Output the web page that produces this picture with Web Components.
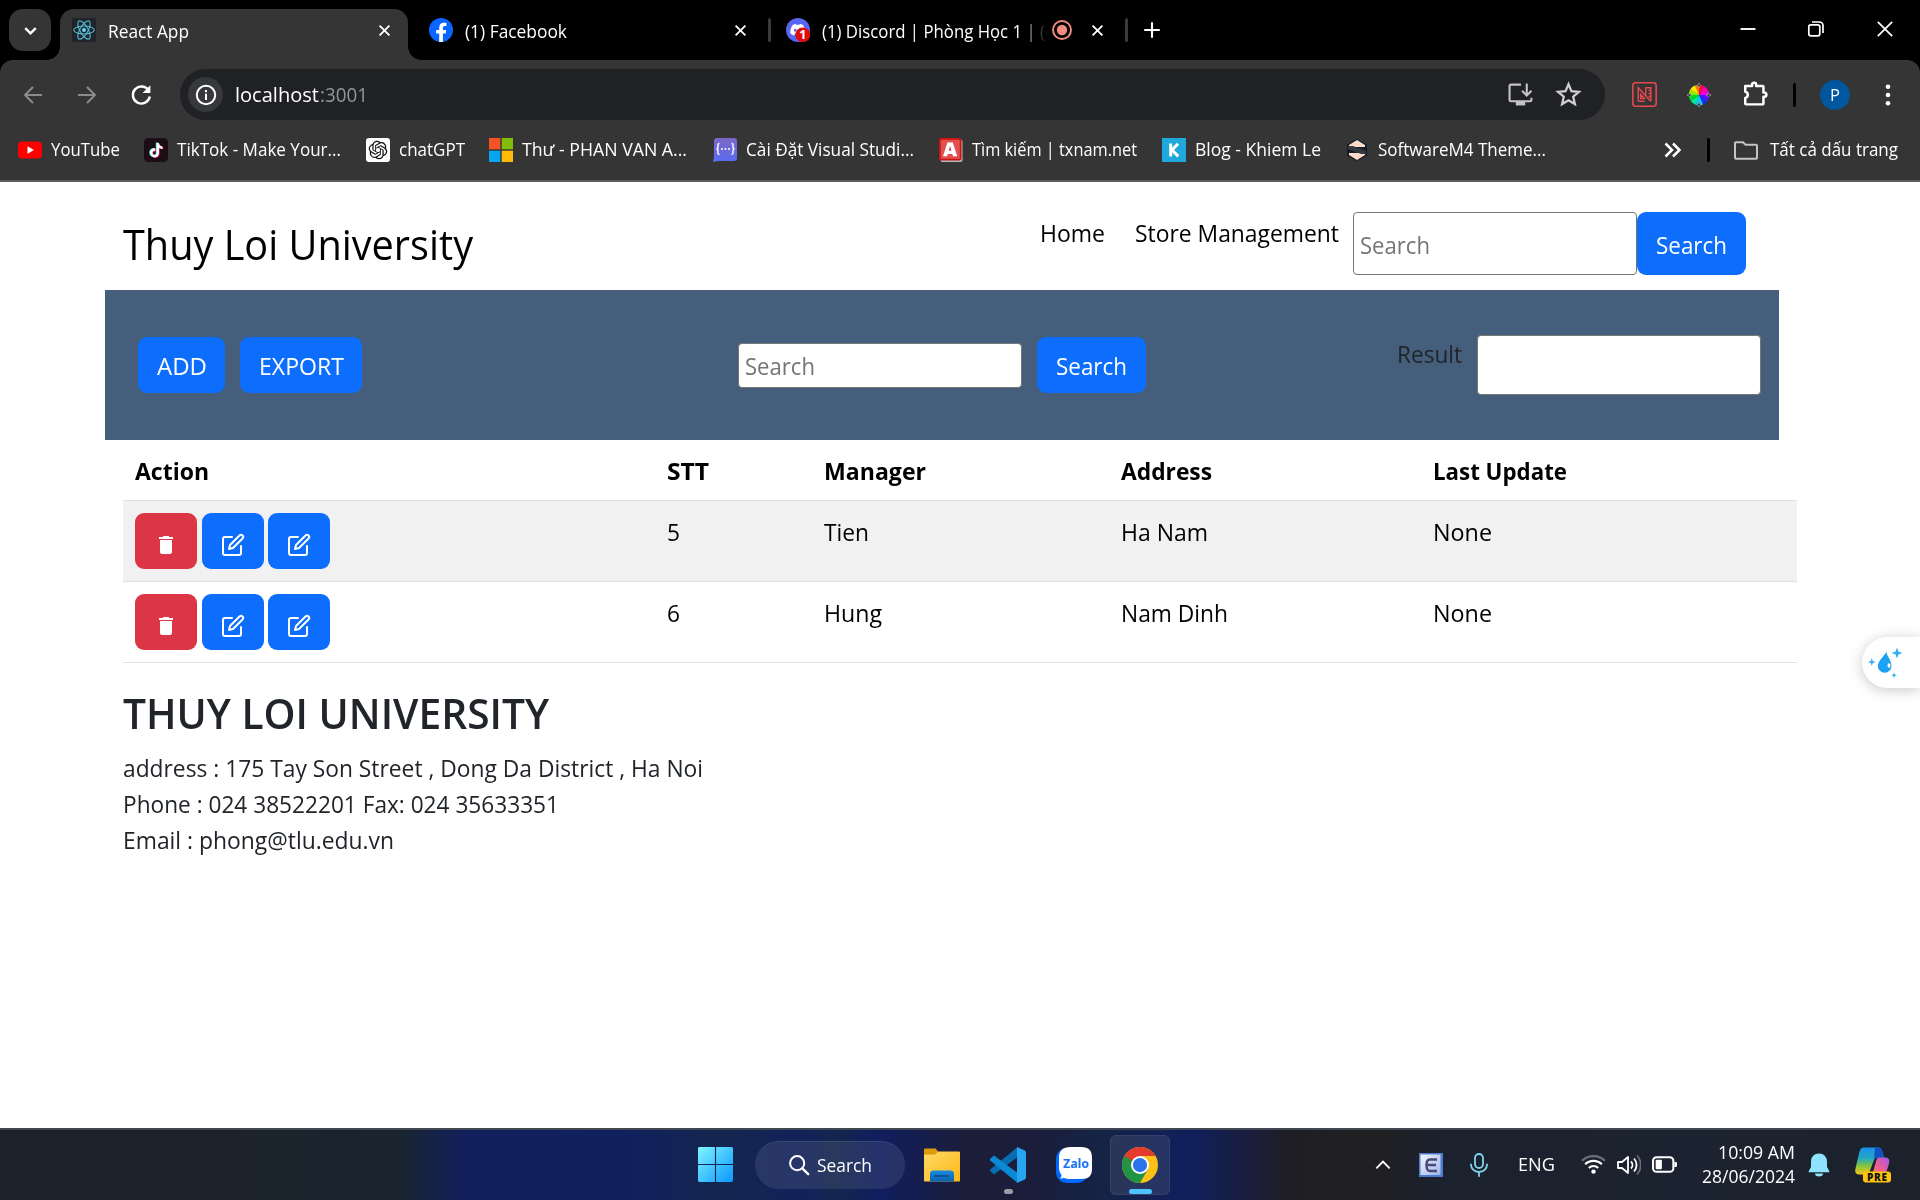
<!DOCTYPE html>
<html lang="vi">
<head>
<meta charset="utf-8">
<title>React App</title>
<style>
html,body{margin:0;height:100%;overflow:hidden;background:#fff;font-family:"Open Sans","Noto Sans",sans-serif}
body{display:flex;flex-direction:column}
store-page{flex:1}
</style>
</head>
<body>
<tab-strip></tab-strip>
<address-bar></address-bar>
<bookmark-bar></bookmark-bar>
<store-page></store-page>
<task-bar></task-bar>
<side-bubble></side-bubble>
<script>
const ICONS = {
down:'<path d="M6 9.2l6 6 6-6" fill="none" stroke="#fff" stroke-width="2.8"/>',
react:'<rect width="24" height="24" rx="2" fill="#20232a"/><g fill="none" stroke="#52b9d3" stroke-width="1.1"><ellipse cx="12" cy="12" rx="10.3" ry="4"/><ellipse cx="12" cy="12" rx="10.3" ry="4" transform="rotate(60 12 12)"/><ellipse cx="12" cy="12" rx="10.3" ry="4" transform="rotate(120 12 12)"/></g><circle cx="12" cy="12" r="2" fill="#61dafb"/>',
close:'<path d="M6.4 6.4l11.2 11.2M17.6 6.4L6.4 17.6" stroke="#fff" stroke-width="2.1"/>',
plus:'<path d="M12 4.2v15.6M4.2 12h15.6" stroke="#fff" stroke-width="2.1"/>',
facebook:'<circle cx="12" cy="12" r="12" fill="#0866ff"/><path fill="#fff" d="M16.7 15.5l.5-3.5h-3.3V9.8c0-1 .5-1.9 2-1.9h1.5v-3S16 4.700 14.700 4.700c-2.700 0-4.500 1.700-4.500 4.700V12h-3v3.500h3V24h3.700v-8.500z"/>',
discord:'<circle cx="12" cy="12" r="12" fill="#5865f2"/><path transform="translate(4.300 4.300) scale(.62)" fill="#fff" d="M20.317 4.37a19.8 19.8 0 00-4.885-1.515.074.074 0 00-.079.037c-.21.375-.444.865-.608 1.25-1.845-.277-3.68-.277-5.487 0-.164-.394-.406-.875-.618-1.25a.077.077 0 00-.078-.037 19.736 19.736 0 00-4.885 1.515.07.07 0 00-.033.028C.533 9.046-.319 13.58.099 18.058a.082.082 0 00.031.056c2.053 1.508 4.041 2.423 5.993 3.029a.078.078 0 00.084-.028c.462-.63.873-1.295 1.226-1.994a.076.076 0 00-.042-.106c-.652-.247-1.274-.549-1.872-.892a.077.077 0 01-.008-.128c.126-.094.252-.192.372-.291a.074.074 0 01.078-.011c3.928 1.794 8.18 1.794 12.061 0a.074.074 0 01.079.01c.12.099.246.198.373.292a.077.077 0 01-.007.128 12.299 12.299 0 01-1.873.891.077.077 0 00-.041.107c.36.698.772 1.363 1.225 1.993a.076.076 0 00.084.029c1.961-.607 3.95-1.522 6.002-3.03a.077.077 0 00.032-.055c.5-5.177-.838-9.674-3.549-13.66a.061.061 0 00-.031-.029zM8.02 15.331c-1.183 0-2.157-1.086-2.157-2.419s.956-2.419 2.157-2.419c1.211 0 2.176 1.095 2.157 2.419 0 1.333-.956 2.419-2.157 2.419zm7.975 0c-1.183 0-2.157-1.086-2.157-2.419s.955-2.419 2.157-2.419c1.211 0 2.176 1.095 2.157 2.419 0 1.333-.946 2.419-2.157 2.419z"/><circle cx="16.800" cy="16.800" r="7.400" fill="#e00b0b"/><text x="16.900" y="21.200" text-anchor="middle" font-family="Open Sans" font-weight="700" font-size="12.500" fill="#fff">1</text>',
record:'<circle cx="12" cy="12" r="9" fill="none" stroke="#f28b82" stroke-width="1.900"/><circle cx="12" cy="12" r="5.200" fill="#f28b82"/>',
min:'<path d="M4.500 12h15" stroke="#fff" stroke-width="1.900"/>',
restore:'<rect x="4.800" y="7.800" width="11" height="11" rx="2" fill="none" stroke="#fff" stroke-width="1.700"/><path d="M8 5h7.500a3.500 3.500 0 013.500 3.500V16" fill="none" stroke="#fff" stroke-width="1.700"/>',
wclose:'<path d="M4.800 4.800l14.400 14.400M19.200 4.800L4.800 19.200" stroke="#fff" stroke-width="1.700"/>',
back:'<path d="M21 12H4.500M12 4l-8 8 8 8" fill="none" stroke="#8b8b8b" stroke-width="2"/>',
fwd:'<path d="M3 12h16.500M12 4l8 8-8 8" fill="none" stroke="#8b8b8b" stroke-width="2"/>',
reload:'<path d="M19 8.300A8.200 8.200 0 1020 14" fill="none" stroke="#fff" stroke-width="2.300"/><path d="M20.500 3v7.500H13z" fill="#fff"/><path d="M16.200 7.400h2v1h-2z" fill="#fff"/>',
info:'<circle cx="12" cy="12" r="9.200" fill="none" stroke="#fff" stroke-width="2"/><path d="M12 10.800v6.200M12 7v2.200" stroke="#fff" stroke-width="2"/>',
install:'<path d="M12.500 2.500H2.800a1.300 1.300 0 00-1.300 1.300v13.400a1.300 1.300 0 001.300 1.300h18.400a1.300 1.300 0 001.300-1.300V15" fill="none" stroke="#c4c4c4" stroke-width="2"/><path d="M7.500 19h9v3.500h-9z" fill="#c4c4c4"/><path d="M18 1.500v11M13.500 8.500l4.500 4.500 4.500-4.500" fill="none" stroke="#c4c4c4" stroke-width="2"/>',
star:'<path d="M12 2.800l2.600 6.200 6.700.6-5.100 4.400 1.500 6.500L12 17.100l-5.700 3.400 1.500-6.500-5.100-4.400 6.700-.6z" fill="none" stroke="#d0d0d0" stroke-width="2"/>',
ruler:'<rect x=".8" y=".8" width="22.400" height="22.400" rx="2.500" fill="none" stroke="#e5484d" stroke-width="1.500"/><path d="M6 18.500V5.500l12 13M8.300 15.800v-4l3.600 4zM13.200 13V5.500h4.800v13M15.800 8h2M15.800 11h2M15.800 14h2M6 18.500h6" fill="none" stroke="#e5484d" stroke-width="1.400"/>',
puzzle:'<path d="M3 5.500h6.300V4.400a1.900 1.900 0 013.800 0v1.100H19a.8.800 0 01.8.800v5.300h.8a1.900 1.900 0 010 3.800h-.8v6.300a.8.800 0 01-.8.800H3.800A.8.800 0 013 21.700v-5.200a2.900 2.900 0 000-5.700z" fill="none" stroke="#fff" stroke-width="2.300" stroke-linejoin="round"/>',
dots:'<g fill="#fff"><circle cx="12" cy="3.800" r="2.300"/><circle cx="12" cy="12" r="2.300"/><circle cx="12" cy="20.200" r="2.300"/></g>',
youtube:'<rect y="3.500" width="24" height="17" rx="4" fill="#f00"/><path d="M9.500 8.200l6.500 3.800-6.500 3.800z" fill="#fff"/>',
tiktok:'<rect width="24" height="24" rx="4.500" fill="#1c0c14"/><g id="n"><path id="p" transform="translate(4.300 4.600) scale(.6)" fill="#25f4ee" d="M12.525.02c1.31-.02 2.61-.01 3.91-.02.08 1.530.63 3.090 1.750 4.170 1.120 1.110 2.700 1.620 4.240 1.790v4.030c-1.440-.05-2.890-.35-4.200-.97-.57-.26-1.100-.59-1.620-.93-.01 2.920.01 5.840-.02 8.750-.08 1.400-.54 2.790-1.350 3.940-1.310 1.920-3.580 3.170-5.910 3.210-1.430.08-2.860-.31-4.080-1.030-2.020-1.190-3.440-3.370-3.650-5.710-.02-.5-.03-1-.01-1.490.18-1.900 1.120-3.720 2.580-4.960 1.660-1.440 3.980-2.130 6.150-1.720.02 1.480-.04 2.960-.04 4.440-.99-.32-2.150-.23-3.020.37-.63.41-1.110 1.040-1.360 1.750-.21.51-.15 1.070-.14 1.610.24 1.640 1.820 3.020 3.500 2.870 1.120-.01 2.190-.66 2.770-1.610.19-.33.4-.67.41-1.060.1-1.790.06-3.570.07-5.360.01-4.030-.01-8.050.02-12.070z"/></g><path transform="translate(5.700 5.400) scale(.6)" fill="#fe2c55" d="M12.525 0h3.900c.08 1.600.63 3.100 1.750 4.200 1.120 1.100 2.700 1.600 4.240 1.800v4c-1.440 0-4.500-.8-5.820-1.900v8.800c-.2 5-4 7.100-7.300 7.100-4 0-7.700-3.200-7.700-7.600 0-4.500 4-8.500 8.700-7.700v4.500c-2.300-.6-4.500 1-4.500 3.400 0 1.900 1.500 3.200 3.500 3.200 1.800 0 3.200-1.200 3.200-3.200z"/><path transform="translate(5 5) scale(.6)" fill="#fff" d="M12.525 0h3.900c.08 1.600.63 3.100 1.750 4.200 1.120 1.100 2.700 1.600 4.240 1.800v4c-1.440 0-4.500-.8-5.820-1.900v8.800c-.2 5-4 7.100-7.300 7.100-4 0-7.700-3.200-7.700-7.600 0-4.500 4-8.500 8.700-7.700v4.500c-2.300-.6-4.500 1-4.500 3.400 0 1.900 1.500 3.200 3.500 3.200 1.800 0 3.200-1.200 3.200-3.200z"/>',
openai:'<rect width="24" height="24" rx="3" fill="#fff"/><path transform="translate(2.700 2.700) scale(.775)" fill="#111" d="M22.2819 9.8211a5.9847 5.9847 0 0 0-.5157-4.9108 6.0462 6.0462 0 0 0-6.5098-2.9A6.0651 6.0651 0 0 0 4.9807 4.1818a5.9847 5.9847 0 0 0-3.9977 2.9 6.0462 6.0462 0 0 0 .7427 7.0966 5.98 5.98 0 0 0 .511 4.9107 6.051 6.051 0 0 0 6.5146 2.9001A5.9847 5.9847 0 0 0 13.2599 24a6.0557 6.0557 0 0 0 5.7718-4.2058 5.9894 5.9894 0 0 0 3.9977-2.9001 6.0557 6.0557 0 0 0-.7475-7.0729zm-9.022 12.6081a4.4755 4.4755 0 0 1-2.8764-1.0408l.1419-.0804 4.7783-2.7582a.7948.7948 0 0 0 .3927-.6813v-6.7369l2.02 1.1686a.071.071 0 0 1 .038.052v5.5826a4.504 4.504 0 0 1-4.4945 4.4944zm-9.6607-4.1254a4.4708 4.4708 0 0 1-.5346-3.0137l.142.0852 4.783 2.7582a.7712.7712 0 0 0 .7806 0l5.8428-3.3685v2.3324a.0804.0804 0 0 1-.0332.0615L9.74 19.9502a4.4992 4.4992 0 0 1-6.1408-1.6464zM2.3408 7.8956a4.485 4.485 0 0 1 2.3655-1.9728V11.6a.7664.7664 0 0 0 .3879.6765l5.8144 3.3543-2.0201 1.1685a.0757.0757 0 0 1-.071 0l-4.8303-2.7865A4.504 4.504 0 0 1 2.3408 7.872zm16.5963 3.8558L13.1038 8.364 15.1192 7.2a.0757.0757 0 0 1 .071 0l4.8303 2.7913a4.4944 4.4944 0 0 1-.6765 8.1042v-5.6772a.79.79 0 0 0-.407-.667zm2.0107-3.0231l-.142-.0852-4.7735-2.7818a.7759.7759 0 0 0-.7854 0L9.409 9.2297V6.8974a.0662.0662 0 0 1 .0284-.0615l4.8303-2.7866a4.4992 4.4992 0 0 1 6.6802 4.66zM8.3065 12.863l-2.02-1.1638a.0804.0804 0 0 1-.038-.0567V6.0742a4.4992 4.4992 0 0 1 7.3757-3.4537l-.142.0805L8.704 5.459a.7948.7948 0 0 0-.3927.6813zm1.0976-2.3654l2.602-1.4998 2.6069 1.4998v2.9994l-2.5974 1.4997-2.6067-1.4997Z"/>',
ms:'<path fill="#f35325" d="M0 0h11.300v11.300H0z"/><path fill="#81bc06" d="M12.700 0H24v11.300H12.700z"/><path fill="#05a6f0" d="M0 12.700h11.300V24H0z"/><path fill="#ffba08" d="M12.700 12.700H24V24H12.700z"/>',
vsm:'<defs><linearGradient id="g" x1="0" y1="0" x2="0" y2="1"><stop offset="0" stop-color="#7a68c8"/><stop offset="1" stop-color="#5b6cf0"/></linearGradient></defs><path fill="url(#g)" d="M4 0h17a3 3 0 013 3v17a3 3 0 01-3 3H5l-5 1 1-5V3a3 3 0 013-3z"/><path d="M6.500 5.500c-2 0-1.500 1.500-1.500 3 0 1.700-.5 2.500-1.500 2.500 1 0 1.500.8 1.500 2.500 0 1.500-.5 3 1.500 3M18.500 5.500c2 0 1.500 1.500 1.500 3 0 1.700.5 2.500 1.500 2.500-1 0-1.500.8-1.500 2.500 0 1.500.5 3-1.500 3" fill="none" stroke="#fff" stroke-width="1.400"/><g fill="#fff"><circle cx="9" cy="11" r="1"/><circle cx="12.500" cy="11" r="1"/><circle cx="16" cy="11" r="1"/></g>',
abox:'<rect x="1.500" y="1.500" width="22" height="22.500" rx="2" fill="#b9b9b9"/><rect x="0" y="0" width="22.500" height="22.500" rx="2" fill="#c81414"/><rect x="1.800" y="1.800" width="19" height="19" fill="#e2504d"/><path fill="#fff" fill-rule="evenodd" d="M8.400 4.500h5.400l4.400 13.700h-4.200l-.6-2.300H8.700l-.6 2.300H4zM9.600 12.800h2.900l-1.450-5z"/>',
kbox:'<rect width="24" height="24" fill="#1fa8dc"/><path d="M8.700 5.500v13M16 5.800l-6 6.200 6.300 6.400" fill="none" stroke="#fff" stroke-width="3"/>',
sm4:'<path d="M12 1l10 5.600v10.800L12 23 2 17.400V6.600z" fill="#141d28"/><path d="M12 2l8 5v2H4V7zM12 22l8-5v-2H4v2z" fill="#fcdcc8"/><path d="M3 8h5l13 5v3h-5L3 11z" fill="#34383f"/>',
more:'<path d="M4.500 5.500l6.500 6.500-6.500 6.500M12 5.500l6.500 6.500-6.500 6.500" fill="none" stroke="#fff" stroke-width="2.500"/>',
folder:'<path d="M2 4.200h7l2.500 2.600H22a1 1 0 011 1v12a1 1 0 01-1 1H2a1 1 0 01-1-1v-14.600a1 1 0 011-1z" fill="none" stroke="#c4c4c4" stroke-width="2"/>',
wheel:'<g stroke="none"><path d="M12 12L8 2.500A10.300 10.300 0 0112 1.700z" fill="#ff7a00"/><path d="M12 12V1.700a10.300 10.300 0 014.500 1z" fill="#ff1020"/><path d="M12 12l4.500-9.300a10.300 10.300 0 014.800 5.300z" fill="#ff00a8"/><path d="M12 12l9.300-4a10.300 10.300 0 011 4z" fill="#f000ff"/><path d="M12 12h10.300a10.300 10.300 0 01-2 6z" fill="#5a10ff"/><path d="M12 12l8.300 6a10.300 10.300 0 01-4.300 3.500z" fill="#1030ff"/><path d="M12 12l4 9.500a10.300 10.300 0 01-7 .4z" fill="#10c8ff"/><path d="M12 12l-3 9.900a10.300 10.300 0 01-5.300-3.900z" fill="#00e8a0"/><path d="M12 12l-8.300 6a10.300 10.300 0 01-2-6z" fill="#00e020"/><path d="M12 12H1.700a10.300 10.300 0 011.500-5.500z" fill="#90f000"/><path d="M12 12L3.200 6.500A10.300 10.300 0 018 2.500z" fill="#ffe800"/></g><g fill="#222" stroke="#b0b0b0" stroke-width=".7"><path d="M12 0l1.300 2.500L12 5l-1.300-2.500zM12 19l1.300 2.500L12 24l-1.300-2.500zM0 12l2.500-1.300L5 12l-2.500 1.300zM19 12l2.500-1.300L24 12l-2.500 1.300z"/></g>',
trash:'<path fill="#fff" d="M6 19c0 1.100.9 2 2 2h8c1.100 0 2-.9 2-2V7H6v12zM19 4h-3.500l-1-1h-5l-1 1H5v2h14V4z"/>',
edit:'<g fill="none" stroke="#fff" stroke-width="2" stroke-linecap="round" stroke-linejoin="round"><path d="M11 4H4a2 2 0 0 0-2 2v14a2 2 0 0 0 2 2h14a2 2 0 0 0 2-2v-7"/><path d="M18.500 2.500a2.121 2.121 0 0 1 3 3L12 15l-4 1 1-4 9.500-9.500z"/></g>',
drop:'<path fill="#1da1f2" d="M18.500 4.500c0 5 5 8 5 14.500a6.800 6.800 0 01-13.600 0c0-5.500 6-9 8.600-14.500z"/><ellipse cx="21" cy="18.500" rx="1.500" ry="2.200" fill="#fff"/><g fill="#35adf5"><path d="M29 .5l1.400 4.100 4.100 1.400-4.100 1.400L29 11.500l-1.400-4.100L23.500 6l4.100-1.400z"/><path d="M3.800 11l1 3 3 1-3 1-1 3-1-3-3-1 3-1z"/><path d="M26 25.500l.8 2 2 .8-2 .8-.8 2-.8-2-2-.8 2-.8z"/></g>',
windows:'<defs><linearGradient id="g" gradientUnits="userSpaceOnUse" x1="0" y1="0" x2="24" y2="24"><stop offset="0" stop-color="#7df5ff"/><stop offset="1" stop-color="#0a97ff"/></linearGradient></defs><path fill="url(#g)" d="M1 0h10.600v11.600H0V1a1 1 0 011-1zM12.400 0H23a1 1 0 011 1v10.600H12.400zM0 12.400h11.600V24H1a1 1 0 01-1-1zM12.400 12.400H24V23a1 1 0 01-1 1H12.400z"/>',
search:'<circle cx="10" cy="10" r="7.700" fill="none" stroke="#fff" stroke-width="2.200"/><path d="M15.600 15.600l6.400 6.400" stroke="#fff" stroke-width="2.600" stroke-linecap="round"/>',
explorer:'<defs><linearGradient id="g" x1="0" y1="0" x2="1" y2="1"><stop offset="0" stop-color="#ffd968"/><stop offset="1" stop-color="#fcb814"/></linearGradient><linearGradient id="b" x1="0" y1="0" x2="0" y2="1"><stop offset="0" stop-color="#1a8cdc"/><stop offset="1" stop-color="#0a62b4"/></linearGradient></defs><path d="M1 1h10.500l3 3.200V9H0V2a1 1 0 011-1z" fill="#dc9c08"/><path d="M0 7h11l3.500-3H35a1 1 0 011 1v28a1 1 0 01-1 1H1a1 1 0 01-1-1z" fill="url(#g)"/><path d="M6 34v-7.500a3.500 3.500 0 013.500-3.500h17a3.500 3.500 0 013.500 3.500V34z" fill="url(#b)"/><path d="M10.500 28.500h14.500" stroke="#084a8c" stroke-width="1.600"/>',
vscode:'<path fill="#0a6cb0" d="M27 .5L27 10.500 4 27.500l-3.500-3a1.500 1.500 0 010-2.300z"/><path fill="#0a8ad4" d="M27 35.500V25.500L4 8.500l-3.500 3a1.500 1.500 0 000 2.300z"/><path fill="#27a4f2" d="M27 0l7.800 3.600A2 2 0 0136 5.400v25.200a2 2 0 01-1.200 1.800L27 36z"/>',
zalo:'<rect x="0" y="1" width="32" height="35" rx="11" fill="#0068ff"/><path d="M14.500 0H25c8 0 11 3.500 11 11v10.500c0 7.500-3 10.500-11 10.500H14c-2.500 0-4.500-.4-6.500-1.300-.8.7-2 1-3.500.8 1.500-1.200 1.700-2.600 1.300-4-1.600-2-2.300-4.200-2.300-7V11C3 3.500 7 0 14.500 0z" fill="#fff"/><text x="20" y="21.300" text-anchor="middle" font-family="Open Sans" font-weight="700" font-size="12.500" textLength="26" lengthAdjust="spacingAndGlyphs" fill="#1672f8">Zalo</text>',
chrome:'<circle cx="24" cy="24" r="24" fill="#fbc116"/><path d="M3.200 12a24 24 0 0020.800 36l10.400-18H13.600z" fill="#229342"/><path d="M3.200 12l10.400 18L24 12h20.800a24 24 0 00-41.600 0z" fill="#e33b2e"/><path d="M3.200 12l10.400 18 5 2L14 18z" fill="#229342"/><circle cx="24" cy="24" r="12" fill="#fff"/><circle cx="24" cy="24" r="9.500" fill="#2b73ec"/>',
up:'<path d="M4 16l8-8 8 8" fill="none" stroke="#fff" stroke-width="2.200"/>',
ebox:'<defs><linearGradient id="g" x1="0" y1="0" x2="1" y2="1"><stop offset="0" stop-color="#f4f6ff"/><stop offset="1" stop-color="#9fb4e8"/></linearGradient></defs><rect width="24" height="24" fill="#4e7ccc"/><rect x="1.500" y="1.500" width="20" height="20.500" fill="url(#g)"/><path d="M18 6.500h-7c-2 0-3.500 1.500-3.500 5.500s1.500 6 3.500 6h7M6.500 12H17" fill="none" stroke="#4a4a78" stroke-width="2.400"/>',
mic:'<g fill="none" stroke="#7fd6ee" stroke-width="1.800" stroke-linecap="round"><rect x="8" y="1" width="8" height="14" rx="4"/><path d="M4 11.500c0 4.500 3.500 7.500 8 7.500s8-3 8-7.500M12 19v4"/></g>',
wifi:'<g fill="none" stroke="#fff" stroke-width="2"><path d="M1 8.500a15.500 15.500 0 0122 0" opacity=".35"/><path d="M4 11.800a11.300 11.300 0 0116 0M7.500 15.300a6.400 6.400 0 019 0"/></g><circle cx="12" cy="18.800" r="2.100" fill="#fff"/>',
volume:'<g fill="none" stroke="#fff" stroke-width="1.800" stroke-linejoin="round"><path d="M1 9v6h4l6 5V4L5 9z"/><path d="M14 8.500a5 5 0 010 7M17 5.500a9.500 9.500 0 010 13"/><path d="M20 2.500a14 14 0 010 19" opacity=".35"/></g>',
battery:'<rect x="1" y="5" width="19.500" height="14" rx="3.500" fill="none" stroke="#fff" stroke-width="2"/><rect x="3.500" y="7.500" width="6" height="9" rx="1" fill="#fff"/><path d="M21.500 9.500h1.200a1.300 1.300 0 011.300 1.300v2.400a1.300 1.300 0 01-1.300 1.300h-1.200z" fill="#fff"/>',
bell:'<path fill="#8fe3ff" d="M12 .5c4.600 0 8 3.400 8 8V14l2.300 4.300v1H1.700v-1L4 14V8.500c0-4.600 3.400-8 8-8zM8 20.500h8a4 3 0 01-8 0z"/>',
copilot:'<defs><linearGradient id="a" x1="0" y1="0" x2="0" y2="1"><stop offset="0" stop-color="#1c8ff0"/><stop offset=".4" stop-color="#22a8c0"/><stop offset=".7" stop-color="#8cc63c"/><stop offset="1" stop-color="#fcc21c"/></linearGradient><linearGradient id="b" x1="1" y1="0" x2="0" y2="1"><stop offset="0" stop-color="#a05cf0"/><stop offset=".5" stop-color="#e85c9c"/><stop offset="1" stop-color="#fc7c4c"/></linearGradient></defs><path d="M9 0h14c3 0 4 2 5 6l1 4h-5c-4 0-5 2-6 5l-3 8c-1 3-2 4-5 4H4c-3 0-4.500-2-3.500-6L4 6c1-4 2-6 5-6z" fill="url(#a)"/><path d="M20 0h3c3 0 4 2 5 6l1 4h-5c-3 0-4 1-5 3z" fill="#1450c0"/><path d="M24 10h6c3.500 0 5 2 4 6l-2.500 8c-1 3-2 4-5 4H17l4-14c.7-2.500 1.500-4 3-4z" fill="url(#b)"/><rect x="8" y="24" width="28" height="11" rx="3" fill="#fcc40c"/><text x="22" y="33.200" text-anchor="middle" font-family="Open Sans" font-weight="800" font-size="10" textLength="20" fill="#151515">PRE</text>'
};
const BOX = {drop:'0 0 35 32',explorer:'0 0 36 35',vscode:'0 0 36 36',zalo:'0 0 36 36',chrome:'0 0 48 48',copilot:'0 0 36 35'};

/* Registers an element whose shadow root holds the given markup. */
function el(name, css, html){
  customElements.define(name, class extends HTMLElement{
    constructor(){
      super();
      const t=document.createElement('template');
      t.innerHTML=`<style>*{box-sizing:border-box}:host{display:block;box-sizing:border-box}${css}</style>${typeof html==='function'?html(this):html}`;
      this.attachShadow({mode:'open'}).append(t.content.cloneNode(true));
    }
  });
}
const ic=(n,s=24,ml=0,extra='')=>`<ui-icon name="${n}" size="${s}" style="margin-left:${ml}px;${extra}"></ui-icon>`;
const tx=(t,w,s=24,extra='')=>`<fit-text w="${w}" style="font-size:${s}px;${extra}">${t}</fit-text>`;

el('tab-strip',`
:host{height:60px;background:#000;color:#fff;flex:none}
.row{display:flex;align-items:center;height:60px}
.drop{width:42px;height:42px;border-radius:14px;background:#353535;margin-left:9px;display:flex;align-items:center;justify-content:center}
.tab{display:flex;align-items:center;height:51px;margin-top:9px;padding-bottom:9px}
.active{position:relative;width:348px;margin-left:9px;background:#353535;border-radius:14px 14px 0 0;padding-left:12px}
.active:before,.active:after{content:"";position:absolute;bottom:0;width:13px;height:13px;background:radial-gradient(circle at 0 0,transparent 12.500px,#353535 13px)}
.active:before{left:-13px}
.active:after{right:-13px;background:radial-gradient(circle at 100% 0,transparent 12.500px,#353535 13px)}
.sep{width:3px;height:24px;border-radius:2px;background:#3a3a3a}
.fade{width:223px;-webkit-mask:linear-gradient(90deg,#000 195px,rgba(0,0,0,.1) 223px);mask:linear-gradient(90deg,#000 195px,rgba(0,0,0,.1) 223px)}
`,`<div class="row"><div class="drop">${ic('down',21)}</div>
<div class="tab active">${ic('react')}${tx('React App',81,17.6,'margin:2px 0 0 12px')}${ic('close',21,185)}</div>
<div class="tab" style="margin-left:21px">${ic('facebook')}${tx('(1) Facebook',102,17.6,'margin:2px 0 0 12px')}${ic('close',21,163)}</div>
<div class="sep" style="margin-left:17px"></div>
<div class="tab" style="margin-left:15px">${ic('discord')}<div class="fade" style="margin:2px 0 0 12px">${tx('(1) Discord | Phòng Học 1 | (',223,17.6)}</div>${ic('record',24,5)}${ic('close',21,13)}</div>
<div class="sep" style="margin-left:17px"></div>
${ic('plus',24,12)}${ic('min',24,572,'margin-top:-2px')}${ic('restore',24,44,'margin-top:-2px')}${ic('wclose',24,45,'margin-top:-2px')}</div>`);

el('address-bar',`
:host{height:60px;background:#000;flex:none}
.row{display:flex;align-items:center;height:60px;background:#353535;border-radius:13px 13px 0 0;color:#fff}
.omni{display:flex;align-items:center;width:1425px;height:51px;border-radius:26px;background:#202124;margin:9px 0 0 26px;padding-left:8px}
.info{width:35px;height:35px;border-radius:50%;background:#37383b;display:flex;align-items:center;justify-content:center}
.right{display:flex;align-items:center;margin-top:9px}
.bar{width:3px;height:24px;background:#000;border-radius:2px;margin-left:25px}
.ava{width:30px;height:30px;border-radius:50%;background:#00579f;margin-left:24px;display:flex;align-items:center;justify-content:center}
`,`<div class="row"><div class="right">${ic('back',24,21)}${ic('fwd',24,30)}${ic('reload',25,30)}</div>
<div class="omni"><div class="info">${ic('info',24)}</div>${tx('localhost',84,20.5,'margin:-1px 0 0 12px')}${tx(':3001',48,20.5,'margin:-1px 0 0 1px;color:#939599')}${ic('install',25,1140)}${ic('star',27,22)}</div>
<div class="right">${ic('ruler',25,27)}${ic('wheel',24,30)}${ic('puzzle',26,31,'margin-top:-3px')}<div class="bar"></div><div class="ava">${tx('P',10,17)}</div>${ic('dots',24,26)}</div></div>`);

const marks=[['youtube','YouTube',69,18],['tiktok','TikTok - Make Your...',164,24],['openai','chatGPT',66,25],['ms','Thư - PHAN VAN A...',165,24],['vsm','Cài Đặt Visual Studi...',168,26],['abox','Tìm kiếm | txnam.net',165,25],['kbox','Blog - Khiem Le',126,25],['sm4','SoftwareM4 Theme...',168,24]];
el('bookmark-bar',`
:host{height:62px;background:#353535;border-bottom:2px solid #5f5f5f;color:#fff;flex:none}
.row{display:flex;align-items:center;height:60px}
.bar{width:3px;height:24px;border-radius:2px;background:#000;margin-left:22px}
`,`<div class="row">${marks.map(m=>ic(m[0],24,m[3])+tx(m[1],m[2],17.6,'margin:-2px 0 0 9px')).join('')}${ic('more',24,115)}<div class="bar"></div>${ic('folder',24,24)}${tx('Tất cả dấu trang',128,17.6,'margin:-2px 0 0 12px')}</div>`);

el('bs-button',`
:host{display:flex;align-items:center;justify-content:center;background:#0d6efd;color:#fff;border-radius:9px;height:56px;flex:none;padding-top:1px}
:host([danger]){background:#dc3545}
`,'<slot></slot>');
el('text-field',`
:host{display:flex;align-items:center;background:#fff;border:1px solid #767676;border-radius:4px;width:284px;padding:1px 0 0 6px;color:#757575;flex:none}
`,'<slot></slot>');

el('site-header',`
:host{height:108px;color:#000}
.row{display:flex;align-items:flex-start}
`,`<div class="row">${tx('Thuy Loi University',350,42,'margin:33px 0 0 123px')}${tx('Home',65,24,'margin:34px 0 0 567px')}${tx('Store Management',204,24,'margin:34px 0 0 30px')}
<text-field style="height:63px;margin:30px 0 0 14px;padding-top:2px">${tx('Search',70)}</text-field><bs-button style="width:109px;height:63px;margin-top:30px;padding-top:2px">${tx('Search',71)}</bs-button></div>`);

el('store-toolbar',`
:host{width:1674px;height:150px;margin-left:105px;background:#445e7b}
.row{display:flex;align-items:center;height:150px}
`,`<div class="row"><bs-button style="width:87px;margin-left:33px">${tx('ADD',50)}</bs-button><bs-button style="width:122px;margin-left:15px">${tx('EXPORT',85)}</bs-button>
<text-field style="height:45px;margin-left:376px">${tx('Search',70)}</text-field><bs-button style="width:109px;margin-left:15px">${tx('Search',71)}</bs-button>
${tx('Result',65,24,'color:#212529;margin:-23px 0 0 251px')}<text-field style="height:60px;margin-left:15px"></text-field></div>`);

const acts='<div class="acts"><bs-button danger>'+ic('trash',24,0,'margin-top:7px')+'</bs-button><bs-button>'+ic('edit',24,0,'margin-top:7px')+'</bs-button><bs-button>'+ic('edit',24,0,'margin-top:7px')+'</bs-button></div>';
const tr=(c,cells)=>`<div class="r ${c}">${cells.map(x=>'<div>'+x+'</div>').join('')}</div>`;
el('store-table',`
:host{width:1674px;margin-left:123px;color:#000}
.r{display:grid;grid-template-columns:532px 157px 297px 312px 1fr;border-bottom:1px solid #dee2e6;padding:12px 0 0 12px;height:81px}
.h{height:61px;font-weight:700}.odd{background:#f1f1f1}
.acts{display:flex;gap:4.500px}.acts bs-button{width:62px}
fit-text{line-height:38px}
`,tr('h',[tx('Action',74),tx('STT',42),tx('Manager',102),tx('Address',91),tx('Last Update',134)])
+tr('odd',[acts,tx('5',13),tx('Tien',45),tx('Ha Nam',87),tx('None',59)])
+tr('',[acts,tx('6',13),tx('Hung',58),tx('Nam Dinh',107),tx('None',59)]));

el('site-footer',`
:host{margin:25px 0 0 123px;color:#212529}
fit-text{line-height:36px}
`,tx('THUY LOI UNIVERSITY',426,42,'font-weight:600;line-height:50px;margin-bottom:12px')+tx('address : 175 Tay Son Street , Dong Da District , Ha Noi',580)+tx('Phone : 024 38522201 Fax: 024 35633351',436)+tx('Email : phong@tlu.edu.vn',271));

el('store-page',':host{background:#fff;overflow:hidden}','<site-header></site-header><store-toolbar></store-toolbar><store-table></store-table><site-footer></site-footer>');

el('side-bubble',`
:host{position:fixed;right:0;top:637px;width:58px;height:51px;border-radius:26px 0 0 26px;background:#fff;box-shadow:0 2px 14px rgba(0,0,0,.22);padding:10px 0 0 6px}
`,ic('drop',35,0,'height:32px'));

el('task-bar',`
:host{height:72px;flex:none;color:#fff;border-top:2px solid #414750;background:linear-gradient(90deg,#1d212b 0,#1b232d 300px,#19242e 400px,#111f5c 465px,#10205e 620px,#14264f 720px,#12225a 800px,#14264e 835px,#101e5e 880px,#1c1d38 970px,#1a1e3c 1040px,#152345 1100px,#101f5c 1190px,#1a1e3c 1250px,#1f1e24 1290px,#202022 1380px,#1b212d 1440px,#1c2330 1700px,#1c212b 1920px)}
.row{display:flex;align-items:center;height:70px;padding-bottom:1px}
.pill{display:flex;align-items:center;width:150px;height:48px;border-radius:24px;background:rgba(255,255,255,.09);border-top:1px solid rgba(255,255,255,.08);margin-left:22px;padding-left:33px}
.app{display:flex;flex-direction:column;align-items:center;justify-content:space-between;width:60px;height:60px;padding-top:12px;border-radius:6px;margin-left:6px;flex:none}
.on{background:rgba(255,255,255,.09);border:1px solid rgba(255,255,255,.07);padding-top:11px}
.dot{width:9px;height:5px;border-radius:3px;background:#9a9ba5;margin-bottom:1px}.on .dot{width:23px;background:#4cc2ff;margin-bottom:0}
.clock{display:flex;flex-direction:column;align-items:flex-end;width:95px;margin:-2px 0 0 23px}
.clock fit-text{line-height:24px}
`,`<div class="row">${ic('windows',35,698)}<div class="pill">${ic('search',22)}${tx('Search',55,18,'margin:-1px 0 0 7px')}</div>
<div class="app" style="margin-left:7px">${ic('explorer',36)}</div><div class="app">${ic('vscode',36)}<div class="dot"></div></div><div class="app">${ic('zalo',36)}</div><div class="app on">${ic('chrome',36)}<div class="dot"></div></div>
${ic('up',20,203)}${ic('ebox',24,26)}${ic('mic',24,24)}${tx('ENG',37,18,'margin:-1px 0 0 27px')}${ic('wifi',25,26)}${ic('volume',24,11)}${ic('battery',25,11)}
<div class="clock">${tx('10:09 AM',77,18)}${tx('28/06/2024',93,18)}</div>${ic('bell',24,12)}${ic('copilot',36,24)}</div>`);

el('ui-icon',`:host{flex:none}svg{display:block;width:100%;height:100%}`,h=>{
  const n=h.getAttribute('name'),s=h.getAttribute('size');
  return `<style>:host{width:${s}px;height:${s}px}</style><svg viewBox="${BOX[n]||'0 0 24 24'}" aria-hidden="true">${ICONS[n]}</svg>`;
});

/* One line of text, condensed or widened to the width in its "w" attribute. */
customElements.define('fit-text',class extends HTMLElement{
  connectedCallback(){
    if(this.shadowRoot)return;
    const w=+this.getAttribute('w');
    this.attachShadow({mode:'open'}).innerHTML=`<style>:host{display:block;flex:none;width:${w}px;white-space:nowrap}span{display:inline-block;transform-origin:0 50%}</style><span><slot></slot></span>`;
    const s=this.shadowRoot.querySelector('span');
    s.style.transform=`scaleX(${w/s.getBoundingClientRect().width})`;
  }
});
</script>
</body>
</html>
